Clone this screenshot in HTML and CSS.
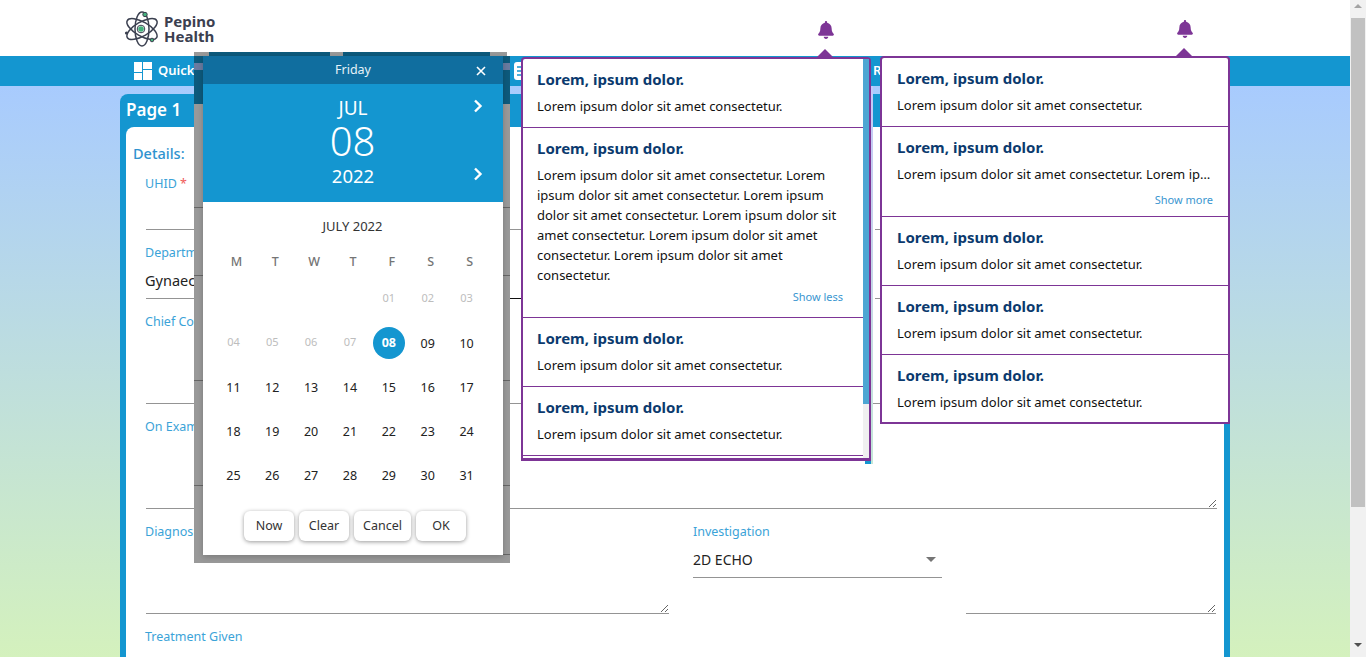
FILE: index.html
```html
<!DOCTYPE html>
<html lang="en">
<head>
<meta charset="utf-8">
<title>Pepino Health</title>
<link rel="stylesheet" href="styles.css">
</head>
<body>
<div class="app">
  <main class="main">
    <header class="topbar">
      <svg class="logo-mark" viewBox="0 0 36 36" width="36" height="36" aria-hidden="true">
        <g fill="none" stroke="#3b4050" stroke-width="1.5">
          <ellipse cx="18" cy="18" rx="17" ry="7" transform="rotate(30 18 18)"/>
          <ellipse cx="18" cy="18" rx="17" ry="7" transform="rotate(-30 18 18)"/>
          <ellipse cx="18" cy="18" rx="17" ry="7" transform="rotate(90 18 18)"/>
          <circle cx="17" cy="18" r="3.8" stroke-width="1"/>
        </g>
        <circle cx="17" cy="18" r="2.8" fill="#45b27c"/>
        <circle cx="21" cy="3.5" r="2.2" fill="#45b27c" stroke="#3b4050"/>
        <circle cx="28" cy="29" r="1.8" fill="#45b27c" stroke="#3b4050"/>
        <circle cx="2.5" cy="22" r="1.6" fill="#3b4050"/>
      </svg>
      <div class="logo-text">Pepino<br>Health</div>
    </header>

    <nav class="navbar">
      <div class="nav-item nav-quick">
        <svg class="nav-icon" viewBox="0 0 18 18" width="18" height="18" aria-hidden="true">
          <rect x="0" y="0" width="8" height="10" fill="#fff"/>
          <rect x="9" y="0" width="9" height="7" fill="#fff"/>
          <rect x="9" y="8" width="9" height="10" fill="#fff"/>
          <rect x="0" y="11" width="8" height="7" fill="#fff"/>
        </svg>
        <span class="nav-text">Quick Actions</span>
      </div>
      <div class="nav-item nav-ehr">
        <svg class="nav-icon" viewBox="0 0 16 18" width="16" height="18" aria-hidden="true">
          <rect x="0" y="0" width="16" height="18" rx="3" fill="#fff"/>
          <path d="M3 5h10M3 9h10M3 13h10" stroke="#1496d0" stroke-width="1.6"/>
        </svg>
        <span class="nav-text">EHR</span>
      </div>
      <div class="nav-item nav-reports"><span class="nav-text">Reports</span></div>
    </nav>

    <div class="content">
      <section class="page-card">
        <h1 class="page-title">Page 1</h1>
        <div class="page-body">
          <h2 class="details">Details:</h2>
          <form class="form">
            <div class="grid3">
              <div class="field">
                <label class="label">UHID <span class="req">*</span></label>
                <div class="input input-tall"></div>
              </div>
              <div class="field field-bare"><div class="input input-tall"></div></div>
              <div class="field field-bare"><div class="input input-tall"></div></div>
            </div>
            <div class="grid3 row-gap">
              <div class="field">
                <label class="label">Department</label>
                <div class="input input-value"><span class="value-text">Gynaecology</span></div>
              </div>
              <div class="field field-bare"><div class="input input-active"></div></div>
              <div class="field field-bare"><div class="input input-tall"></div></div>
            </div>
            <div class="field row-gap">
              <label class="label">Chief Complaints</label>
              <textarea class="area"></textarea>
            </div>
            <div class="field row-gap">
              <label class="label">On Examination</label>
              <textarea class="area"></textarea>
            </div>
            <div class="grid-diag row-gap">
              <div class="field">
                <label class="label">Diagnosis</label>
                <textarea class="area"></textarea>
              </div>
              <div class="field">
                <label class="label label-flush">Investigation</label>
                <div class="select">
                  <span>2D ECHO</span>
                  <span class="select-arrow"></span>
                </div>
              </div>
              <div class="field field-end">
                <textarea class="area"></textarea>
              </div>
            </div>
            <div class="field row-gap">
              <label class="label">Treatment Given</label>
            </div>
          </form>
        </div>
      </section>
    </div>

    <svg class="bell bell-one" viewBox="0 0 448 512" width="16" height="18" aria-hidden="true"><path d="M224 512c35.32 0 63.97-28.65 63.97-64H160.03c0 35.35 28.65 64 63.97 64zm215.39-149.71c-19.32-20.76-55.47-51.99-55.47-154.29 0-77.7-54.48-139.9-127.94-155.16V32c0-17.67-14.32-32-31.98-32s-31.98 14.33-31.98 32v20.84C118.56 68.1 64.08 130.3 64.08 208c0 102.3-36.15 133.53-55.47 154.29-6 6.45-8.66 14.16-8.61 21.71.11 16.4 12.98 32 32.1 32h383.8c19.12 0 32-15.6 32.1-32 .05-7.55-2.61-15.27-8.61-21.71z"/></svg>
    <svg class="bell bell-two" viewBox="0 0 448 512" width="16" height="18" aria-hidden="true"><path d="M224 512c35.32 0 63.97-28.65 63.97-64H160.03c0 35.35 28.65 64 63.97 64zm215.39-149.71c-19.32-20.76-55.47-51.99-55.47-154.29 0-77.7-54.48-139.9-127.94-155.16V32c0-17.67-14.32-32-31.98-32s-31.98 14.33-31.98 32v20.84C118.56 68.1 64.08 130.3 64.08 208c0 102.3-36.15 133.53-55.47 154.29-6 6.45-8.66 14.16-8.61 21.71.11 16.4 12.98 32 32.1 32h383.8c19.12 0 32-15.6 32.1-32 .05-7.55-2.61-15.27-8.61-21.71z"/></svg>

    <div class="sliver"></div>

    <aside class="notify notify-one">
      <div class="notify-scroll">
        <div class="notify-list">
          <article class="note">
            <h3 class="note-title">Lorem, ipsum dolor.</h3>
            <p class="note-text">Lorem ipsum dolor sit amet consectetur.</p>
          </article>
          <article class="note note-long">
            <h3 class="note-title">Lorem, ipsum dolor.</h3>
            <p class="note-text">Lorem ipsum dolor sit amet consectetur. Lorem ipsum dolor sit amet consectetur. Lorem ipsum dolor sit amet consectetur. Lorem ipsum dolor sit amet consectetur. Lorem ipsum dolor sit amet consectetur. Lorem ipsum dolor sit amet consectetur.</p>
            <a class="note-toggle">Show less</a>
          </article>
          <article class="note">
            <h3 class="note-title">Lorem, ipsum dolor.</h3>
            <p class="note-text">Lorem ipsum dolor sit amet consectetur.</p>
          </article>
          <article class="note">
            <h3 class="note-title">Lorem, ipsum dolor.</h3>
            <p class="note-text">Lorem ipsum dolor sit amet consectetur.</p>
          </article>
        </div>
        <div class="notify-bar"><div class="notify-thumb"></div></div>
      </div>
    </aside>

    <aside class="notify notify-two">
      <article class="note">
        <h3 class="note-title">Lorem, ipsum dolor.</h3>
        <p class="note-text">Lorem ipsum dolor sit amet consectetur.</p>
      </article>
      <article class="note note-more">
        <h3 class="note-title">Lorem, ipsum dolor.</h3>
        <p class="note-text note-clamp">Lorem ipsum dolor sit amet consectetur. Lorem ipsum dolor sit amet consectetur.</p>
        <a class="note-toggle">Show more</a>
      </article>
      <article class="note">
        <h3 class="note-title">Lorem, ipsum dolor.</h3>
        <p class="note-text">Lorem ipsum dolor sit amet consectetur.</p>
      </article>
      <article class="note">
        <h3 class="note-title">Lorem, ipsum dolor.</h3>
        <p class="note-text">Lorem ipsum dolor sit amet consectetur.</p>
      </article>
      <article class="note note-last">
        <h3 class="note-title">Lorem, ipsum dolor.</h3>
        <p class="note-text">Lorem ipsum dolor sit amet consectetur.</p>
      </article>
    </aside>

    <div class="backdrop">
      <div class="dialog">
        <div class="dlg-day">
          <span>Friday</span>
          <svg class="dlg-close" viewBox="0 0 10 10" width="10" height="10" aria-hidden="true"><path d="M1 1l8 8M9 1l-8 8" stroke="#fff" stroke-width="1.6"/></svg>
        </div>
        <div class="dlg-date">
          <div class="dlg-month">JUL</div>
          <div class="dlg-num">08</div>
          <div class="dlg-year">2022</div>
          <svg class="chev chev-month" viewBox="0 0 10 14" width="10" height="14" aria-hidden="true"><path d="M2 1.5L7.5 7 2 12.5" fill="none" stroke="#fff" stroke-width="2.4"/></svg>
          <svg class="chev chev-year" viewBox="0 0 10 14" width="10" height="14" aria-hidden="true"><path d="M2 1.5L7.5 7 2 12.5" fill="none" stroke="#fff" stroke-width="2.4"/></svg>
        </div>
        <div class="cal">
          <div class="cal-title">JULY 2022</div>
          <div class="cal-week"><span>M</span><span>T</span><span>W</span><span>T</span><span>F</span><span>S</span><span>S</span></div>
          <div class="cal-days">
            <span></span><span></span><span></span><span></span>
            <span class="off">01</span><span class="off">02</span><span class="off">03</span>
            <span class="off">04</span><span class="off">05</span><span class="off">06</span><span class="off">07</span>
            <span class="sel"><b>08</b></span><span>09</span><span>10</span>
            <span>11</span><span>12</span><span>13</span><span>14</span><span>15</span><span>16</span><span>17</span>
            <span>18</span><span>19</span><span>20</span><span>21</span><span>22</span><span>23</span><span>24</span>
            <span>25</span><span>26</span><span>27</span><span>28</span><span>29</span><span>30</span><span>31</span>
          </div>
          <div class="cal-actions">
            <button class="btn" type="button">Now</button>
            <button class="btn" type="button">Clear</button>
            <button class="btn btn-wide" type="button">Cancel</button>
            <button class="btn" type="button">OK</button>
          </div>
        </div>
      </div>
    </div>
  </main>

  <div class="scrollbar">
    <span class="arrow-up"></span>
    <div class="scroll-thumb"></div>
    <span class="arrow-down"></span>
  </div>
</div>
</body>
</html>
```

FILE: styles.css
```css
* { box-sizing: border-box; }
html, body { margin: 0; height: 100%; overflow: hidden; }
body { font-family: "Noto Sans", "Open Sans", sans-serif; color: #222; background: #fff; }

.app { display: flex; height: 657px; width: 1366px; }
.main { position: relative; flex: 1; min-width: 0; height: 657px; overflow: hidden; display: flex; flex-direction: column; }

/* Top */
.topbar { height: 56px; flex: none; background: #fff; display: flex; align-items: center; padding-left: 124px; }
.logo-mark { display: block; margin-top: 2px; }
.logo-text { margin-left: 4px; padding-top: 2px; font-size: 15px; line-height: 15px; font-weight: 700; color: #3b4050; }

.navbar { height: 30px; flex: none; background: #1496d0; display: flex; padding-left: 134px; color: #fff; font-size: 13px; font-weight: 600; }
.nav-item { display: flex; align-items: center; gap: 6px; }
.nav-quick { width: 380px; }
.nav-ehr { width: 359px; }
.nav-icon { display: block; flex: none; }
.nav-text { margin-top: -2px; }

.content { flex: 1; min-height: 0; padding: 8px 120px 0; width: 1350px; background: linear-gradient(#a8cbfe, #d4f1bd); }
.page-card { background: #1496d0; width: 1110px; height: 700px; border-radius: 8px 8px 0 0; padding: 0 6px; }
.page-title { margin: 0; height: 33px; line-height: 31px; font-size: 17px; font-weight: 600; color: #fff; }
.page-body { background: #fff; border-radius: 8px 0 0 0; height: 100%; padding: 16px 7px 0 7px; }
.details { margin: 0; height: 20px; line-height: 20px; font-size: 14.5px; font-weight: 500; color: #2f93cf; }

/* Form */
.form { padding: 12px 0 0 13px; }
.grid3 { display: grid; grid-template-columns: repeat(3, 1fr); column-gap: 22px; }
.grid-diag { display: grid; grid-template-columns: 523px 249px 250px; column-gap: 24px; }
.row-gap { margin-top: 14px; }
.field { min-width: 0; display: flex; flex-direction: column; }
.field-bare { justify-content: flex-end; }
.field-end { justify-content: flex-end; }
.label { display: block; height: 18px; line-height: 18px; font-size: 12.5px; color: #3ba3d8; margin-left: -1px; }
.label-flush { margin-left: 0; }
.req { color: #f05a5a; }
.input { border-bottom: 1px solid #949494; }
.input-tall { height: 37px; }
.input-active { height: 37px; border-bottom-color: #111; }
.input-value { height: 37px; line-height: 37px; font-size: 14.5px; color: #222; }
.value-text { margin-left: -1px; }
.area { display: block; width: 100%; height: 73px; padding: 0; border: 0; border-bottom: 1px solid #949494; outline: 0; background: #fff; font: inherit; }
.select { height: 37px; border-bottom: 1px solid #949494; display: flex; align-items: center; justify-content: space-between; padding: 0 6px 0 0; font-size: 14px; color: #222; }
.select-arrow { width: 0; height: 0; border-left: 5.5px solid transparent; border-right: 5.5px solid transparent; border-top: 5.5px solid #757575; }

/* Notifications */
.bell { position: absolute; fill: #7d3596; }
.bell-one { left: 818px; top: 21px; }
.bell-two { left: 1177px; top: 20px; }

.sliver { position: absolute; left: 871px; top: 86px; width: 2px; height: 378px; background: linear-gradient(#c5c8f8, #c4e6d8); }
.sliver::before { content: ""; position: absolute; left: -6px; bottom: 0; width: 6px; height: 3px; background: #1496d0; }

.notify { position: absolute; background: #fff; border: 2px solid #7d3596; border-radius: 4px 4px 0 0; width: 350px; }
.notify::before { content: ""; position: absolute; top: -10px; width: 0; height: 0; border-left: 8.5px solid transparent; border-right: 8.5px solid transparent; border-bottom: 8px solid #7d3596; }
.notify-one { left: 521px; top: 57px; height: 404px; border-bottom-width: 3px; }
.notify-one::before { left: 294px; }
.notify-two { left: 880px; top: 56px; }
.notify-two::before { left: 294px; }

.notify-scroll { display: flex; height: 100%; overflow: hidden; }
.notify-list { flex: 1; min-width: 0; }
.notify-bar { width: 6px; flex: none; background: #f0f0f0; }
.notify-thumb { height: 345px; background: #4da6d3; }

.note { padding: 10px 20px 11px 14px; border-bottom: 1px solid #7d3596; }
.notify-two .note { padding-left: 15px; padding-right: 15px; }
.note-title { margin: 0; font-size: 15px; line-height: 20px; font-weight: 700; color: #0b3a6e; }
.note-text { margin: 7px 0 0; font-size: 13px; line-height: 20px; color: #111; }
.note-clamp { white-space: nowrap; overflow: hidden; text-overflow: ellipsis; }
.note-long { padding-bottom: 12px; }
.note-toggle { display: block; margin-top: 4px; line-height: 16px; font-size: 11px; color: #3a96d0; text-align: right; }
.notify-two .note-more { padding-bottom: 8px; }
.note-more .note-toggle { margin-top: 8px; }
.notify-two .note-last { padding-bottom: 10px; border-bottom: 0; }

/* Date picker dialog */
.backdrop {
  position: absolute; left: 194px; top: 52px; width: 316px; height: 511px;
  padding: 4px 7px 8px 9px;
  background-color: #999;
  background-image:
    linear-gradient(90deg, #999 15px, #0d5a7c 15px 136px, #999 136px 149px, #0d5a7c 149px 296px, #999 296px 313px, #fff 313px),
    linear-gradient(#0d5a7c 7px, #6a7ba0 7px 14px, #0d5a7c 14px),
    linear-gradient(#666, #666), linear-gradient(#666, #666), linear-gradient(#666, #666), linear-gradient(#666, #666), linear-gradient(#666, #666);
  background-size: 100% 4px, 100% 48px, 100% 1px, 100% 1px, 100% 1px, 100% 1px, 7px 1px;
  background-position: 0 0, 0 4px, 0 155px, 0 223px, 0 328px, 0 433px, 100% 502px;
  background-repeat: no-repeat;
}
.dialog { width: 300px; height: 499px; background: #fff; display: flex; flex-direction: column; box-shadow: 0 2px 6px rgba(0,0,0,.2); }
.dlg-day { position: relative; height: 28px; flex: none; background: #106e9f; color: #e6f2f8; font-size: 12.5px; line-height: 28px; text-align: center; }
.dlg-close { position: absolute; right: 17px; top: 10px; }
.dlg-date { position: relative; height: 118px; flex: none; background: #1496d0; color: #fff; padding-top: 12px; text-align: center; font-weight: 400; }
.dlg-month { font-size: 19px; line-height: 24px; }
.dlg-num { font-size: 40px; line-height: 44px; margin-top: -1px; font-weight: 300; padding-right: 1px; }
.dlg-year { font-size: 18.5px; line-height: 24px; margin-top: 1px; }
.chev { position: absolute; left: 270px; }
.chev-month { top: 15px; }
.chev-year { top: 83px; }

.cal { flex: 1; padding: 12px 17px 14px 11px; }
.cal-title { height: 24px; line-height: 24px; font-size: 13px; color: #333; text-align: center; padding-left: 5px; }
.cal-week { margin: 12px -3px 0 3px; display: grid; grid-template-columns: repeat(7, 1fr); height: 24px; line-height: 24px; text-align: center; font-size: 12.5px; font-weight: 500; color: #757575; }
.cal-days { margin-top: 3px; display: grid; grid-template-columns: repeat(7, 1fr); grid-auto-rows: 44px; text-align: center; font-size: 12.5px; color: #222; }
.cal-days span { display: flex; align-items: center; justify-content: center; }
.cal-days .off { font-size: 11px; color: #bdbdbd; padding-bottom: 4px; }
.cal-days .sel b { width: 32px; height: 32px; border-radius: 50%; background: #1496d0; color: #fff; font-weight: 700; line-height: 32px; }
.cal-actions { margin-top: 14px; display: flex; gap: 5px; padding-left: 30px; }
.btn { width: 50px; height: 30px; padding: 0 0 2px; border: 0; border-radius: 6px; background: #fff; box-shadow: 0 1px 4px rgba(0,0,0,.4); font: inherit; font-size: 12.5px; color: #333; }
.btn-wide { width: 57px; }

/* Window scrollbar */
.scrollbar { width: 16px; flex: none; height: 657px; background: #f1f1f1; position: relative; display: flex; flex-direction: column; align-items: center; }
.scroll-thumb { width: 14px; height: 489px; margin-top: 10px; background: #c1c1c1; }
.arrow-up { margin-top: 4px; width: 0; height: 0; border-left: 4px solid transparent; border-right: 4px solid transparent; border-bottom: 4px solid #a3a3a3; }
.arrow-down { margin-top: 136px; width: 0; height: 0; border-left: 4px solid transparent; border-right: 4px solid transparent; border-top: 4px solid #505050; }
```
